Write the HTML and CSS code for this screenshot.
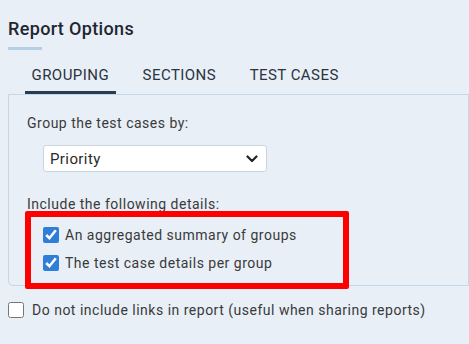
FILE: index.html
```html
<!DOCTYPE html>
<html lang="en">
<head>
    <meta charset="UTF-8">
    <meta name="viewport" content="width=device-width, initial-scale=1.0">
    <title>Report Options</title>
    <link rel="stylesheet" href="styles.css">
</head>
<body>

<div class="page">
    <h2 class="title">Report Options</h2>

    <!-- Pestañas -->
    <nav class="tabs">
        <span class="tab active">GROUPING</span>
        <span class="tab">SECTIONS</span>
        <span class="tab">TEST CASES</span>
    </nav>

    <section class="panel">
        <p class="label">Group the test cases by:</p>
        <div class="select-wrap">
            <select class="select">
                <option>Priority</option>
            </select>
            <svg class="chevron" width="12" height="8" viewBox="0 0 12 8">
                <path d="M1.5 1.5 L6 6 L10.5 1.5" fill="none" stroke="#222" stroke-width="2.2" stroke-linecap="round" stroke-linejoin="round"/>
            </svg>
        </div>

        <p class="label label-details">Include the following details:</p>
        <div class="details">
            <div class="highlight"></div>
            <label class="check-row"><input type="checkbox" checked> An aggregated summary of groups</label>
            <label class="check-row"><input type="checkbox" checked> The test case details per group</label>
        </div>
    </section>

    <label class="check-row no-links"><input type="checkbox"> Do not include links in report (useful when sharing reports)</label>
</div>

</body>
</html>
```

FILE: styles.css
```css
body {
    margin: 0;
    padding: 0;
    background-color: #e8eff7;
    font-family: Roboto, "Liberation Sans", sans-serif;
    color: #3a3a3a;
    font-size: 14px;
    line-height: 20px;
    letter-spacing: 0.5px;
}

.page {
    padding: 17px 0 0 8px;
}

.title {
    margin: 0;
    font-size: 18px;
    line-height: 24px;
    font-weight: 500;
    letter-spacing: 0.35px;
    color: #1f2630;
    padding-bottom: 8px;
}

.title::after {
    content: "";
    display: block;
    width: 34px;
    height: 3px;
    margin-top: 6px;
    background-color: #b6cfe3;
}

/* Pestañas */
.tabs {
    display: flex;
    gap: 20.5px;
    padding-left: 17px;
    margin-top: 7px;
}

.tab {
    padding: 0 6.5px 6px;
    font-size: 15px;
    letter-spacing: 0.45px;
    color: #2a3340;
    border-bottom: 3px solid transparent;
}

.tab.active {
    border-bottom-color: #283c50;
}

.panel {
    border: 1px solid #c3d7e8;
    border-radius: 0 0 0 5px;
    padding: 18px 18px 12px;
}

.label {
    margin: 0;
}

.select-wrap {
    position: relative;
    width: 224px;
    margin: 12px 0 0 16px;
}

.select {
    appearance: none;
    width: 100%;
    height: 27px;
    padding: 0 6px;
    border: 1px solid #c9d5e0;
    border-radius: 3px;
    background-color: #fff;
    font-family: inherit;
    font-size: 15px;
    letter-spacing: 0.4px;
    color: #2a2a2a;
}

.chevron {
    position: absolute;
    right: 9px;
    top: 10px;
}

.label-details {
    margin-top: 22px;
}

.details {
    position: relative;
    margin: 11px 0 0 16px;
}

/* Recuadro rojo de resaltado */
.highlight {
    position: absolute;
    left: -18px;
    top: -14px;
    width: 312px;
    height: 66px;
    border: 6px solid #ff0000;
    border-radius: 2px;
}

.check-row {
    display: flex;
    align-items: center;
    gap: 6px;
    height: 20px;
}

.details .check-row + .check-row {
    margin-top: 8px;
}

.check-row input {
    width: 16px;
    height: 16px;
    margin: 0;
    accent-color: #2f7fd8;
}

.no-links {
    margin-top: 14px;
    gap: 8px;
}
```
